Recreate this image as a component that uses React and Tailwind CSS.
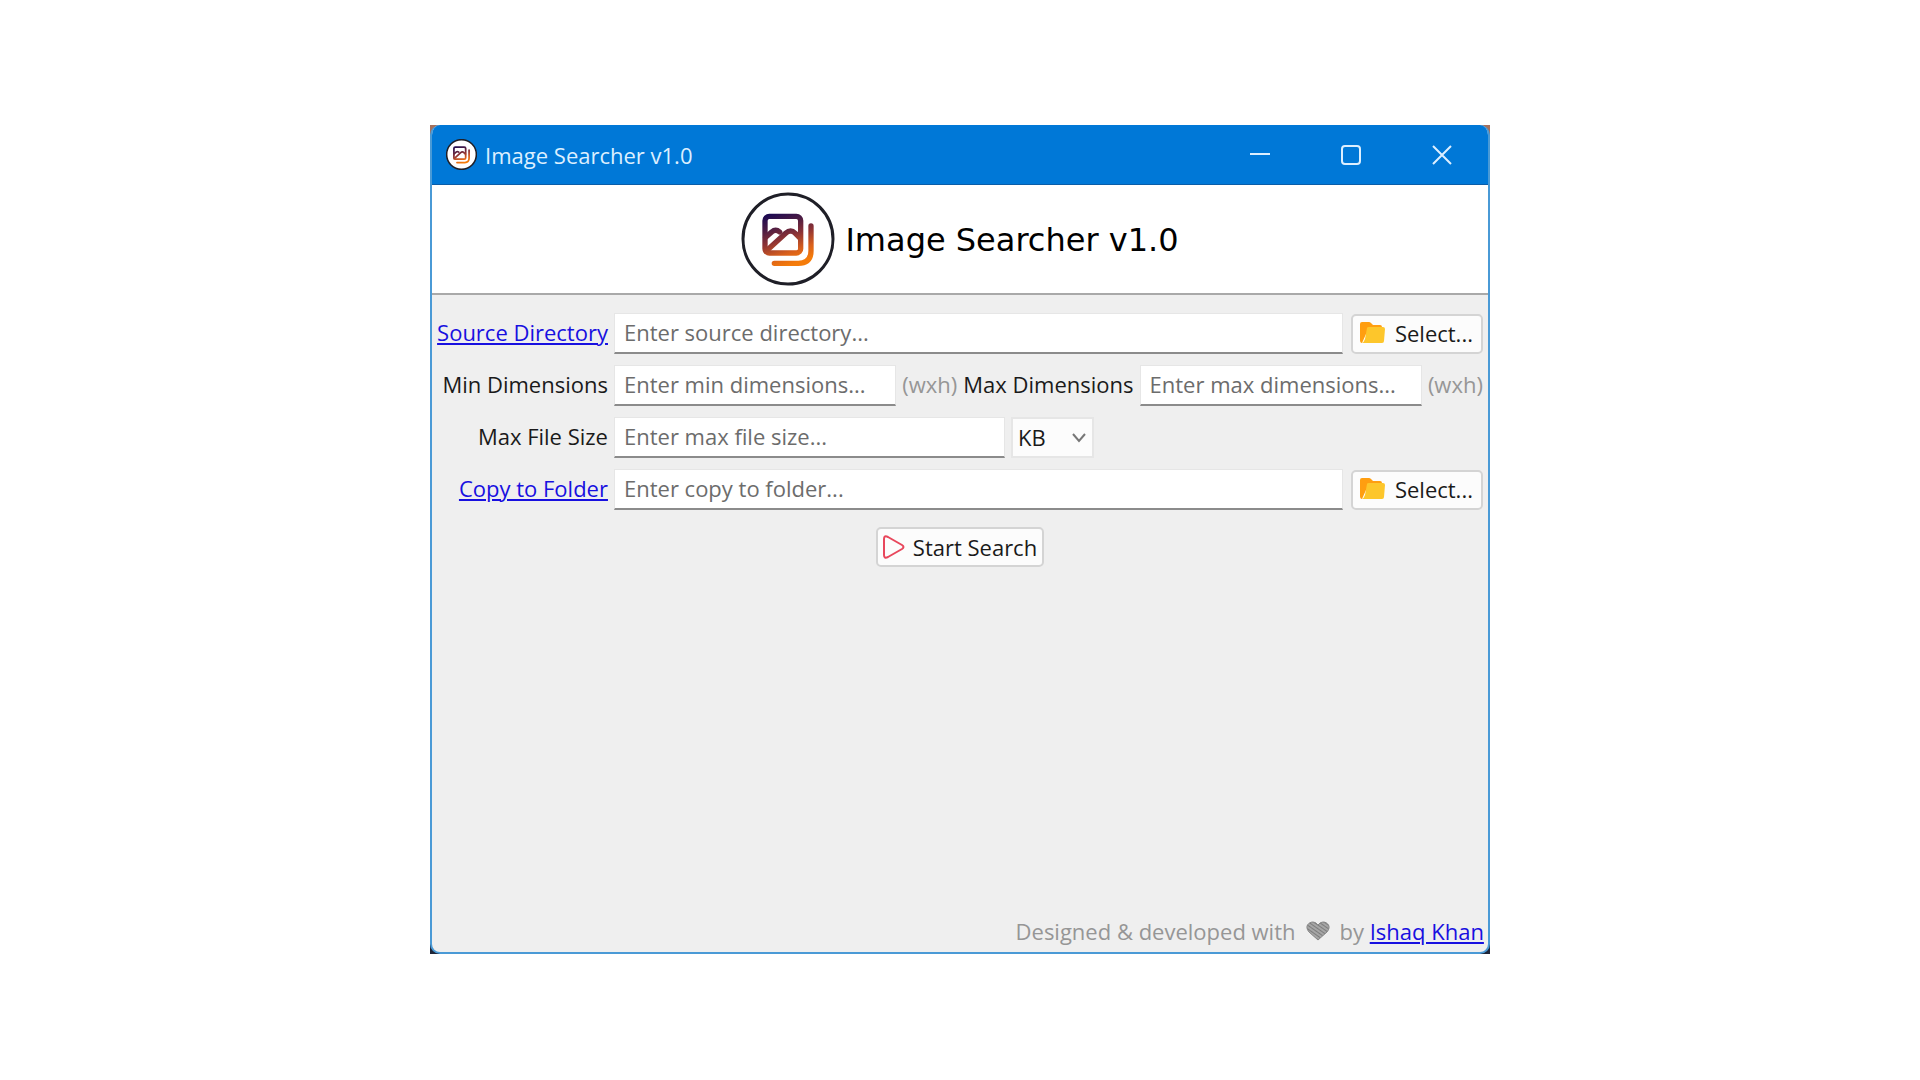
import React from "react";

function Logo({ className, ring }) {
  return (
    <svg className={className} viewBox="36 36 282 282" fill="none" aria-hidden="true">
      <defs>
        <linearGradient id="logoStroke" gradientUnits="userSpaceOnUse" x1="130" y1="100" x2="185" y2="255">
          <stop offset="0" stopColor="#1c0a52" />
          <stop offset="0.25" stopColor="#4c1c44" />
          <stop offset="0.5" stopColor="#8c3235" />
          <stop offset="0.78" stopColor="#d9601c" />
          <stop offset="1" stopColor="#f57c0a" />
        </linearGradient>
      </defs>
      <circle cx="177" cy="177" r="135" fill="#fff" stroke="#1f1f27" strokeWidth={ring} />
      <g stroke="url(#logoStroke)" strokeWidth="16" strokeLinecap="round" strokeLinejoin="round">
        <rect x="108" y="109" width="107" height="110" rx="13" />
        <path d="M110 172 L128 156 Q140 146 152 156" />
        <path d="M111 214 L170 160 Q185 146 199 160 L213 174" />
        <path d="M246 138 V212 Q246 250 208 250 H136" />
      </g>
    </svg>
  );
}

function FolderIcon() {
  return (
    <svg className="h-[22px] w-[25px] shrink-0" viewBox="0 0 25 22" aria-hidden="true">
      <path d="M0 2 Q0 0 2 0 H9 Q10 0 11 1 L13 3 H20 Q22 3 22 5 V12 H6 L2 21 Q0 21 0 18 Z" fill="#ff9e10" />
      <path d="M7 6 Q7 5 9 5 H23 Q25 5 25 7 L24 19 Q24 21 22 21 H2 Q4 20 5 17 Z" fill="#fdc62b" />
    </svg>
  );
}

const link = "text-[#1810e0] underline decoration-2 underline-offset-2";
const labelText = "whitespace-nowrap pb-1 text-right";
const hint = "pb-1 text-[#969696]";
const field =
  "h-[41px] min-w-0 border border-b-2 border-[#e6e6e6] border-b-[#8b8b8b] bg-white px-[9px] pb-[2px] text-[#222] outline-none placeholder:text-[#6c6c6c]";
const button =
  "flex items-center rounded-[5px] border-2 border-[#d4d4d4] bg-[#fcfcfc] text-[#1a1a1a]";

function SelectButton() {
  return (
    <button type="button" className={`${button} h-10 w-[132px] shrink-0 gap-[10px] pb-[2px] pl-[7px]`}>
      <FolderIcon />
      Select...
    </button>
  );
}

function TitleBar() {
  return (
    <header className="flex h-[60px] items-center border-b border-[#0a5da8] bg-[#0078d7] pl-[14px] pr-9 text-[#dcefff]">
      <Logo className="size-[31px]" ring="14" />
      <span className="ml-2 flex-1">Image Searcher v1.0</span>
      <div className="flex items-center gap-[71px]">
        <button type="button" aria-label="Minimize">
          <svg className="size-5" viewBox="0 0 20 20" stroke="currentColor" strokeWidth="2"><path d="M0 9 H20" /></svg>
        </button>
        <button type="button" aria-label="Maximize">
          <svg className="size-5" viewBox="0 0 20 20" fill="none" stroke="currentColor" strokeWidth="2"><rect x="1" y="1" width="18" height="18" rx="3" /></svg>
        </button>
        <button type="button" aria-label="Close">
          <svg className="size-5" viewBox="0 0 20 20" stroke="currentColor" strokeWidth="2"><path d="M1 1 L19 19 M19 1 L1 19" /></svg>
        </button>
      </div>
    </header>
  );
}

function SearchForm() {
  return (
    <form className="px-[5px] pt-[18px]" onSubmit={(e) => e.preventDefault()}>
      <div className="grid grid-cols-[auto_minmax(0,1fr)] items-center gap-x-[6px] gap-y-[11px]">
        <label htmlFor="source" className={labelText}><a href="#source" className={link}>Source Directory</a></label>
        <div className="flex items-center gap-2">
          <input id="source" className={`${field} flex-1`} placeholder="Enter source directory..." />
          <SelectButton />
        </div>

        <label htmlFor="min" className={labelText}>Min Dimensions</label>
        <div className="flex items-center gap-[6px]">
          <input id="min" className={`${field} flex-1`} placeholder="Enter min dimensions..." />
          <span className={hint}>(wxh)</span>
          <label htmlFor="max" className={labelText}>Max Dimensions</label>
          <input id="max" className={`${field} flex-1`} placeholder="Enter max dimensions..." />
          <span className={hint}>(wxh)</span>
        </div>

        <label htmlFor="size" className={labelText}>Max File Size</label>
        <div className="flex items-center gap-[6px]">
          <input id="size" className={`${field} w-[45%]`} placeholder="Enter max file size..." />
          <div className="relative">
            <select id="unit" aria-label="Size unit" className="h-[41px] w-[83px] appearance-none border-2 border-[#e6e6e6] bg-[#fcfcfc] pb-[2px] pl-[5px] outline-none">
              <option>KB</option>
              <option>MB</option>
            </select>
            <svg className="pointer-events-none absolute right-2 top-4 h-[10px] w-[14px]" viewBox="0 0 14 10" fill="none" stroke="#777" strokeWidth="2"><path d="M1 1 L7 8 L13 1" /></svg>
          </div>
        </div>

        <label htmlFor="copy" className={labelText}><a href="#copy" className={link}>Copy to Folder</a></label>
        <div className="flex items-center gap-2">
          <input id="copy" className={`${field} flex-1`} placeholder="Enter copy to folder..." />
          <SelectButton />
        </div>
      </div>

      <button type="submit" className={`${button} mx-auto mt-[17px] h-10 gap-2 px-[5px]`}>
        <svg className="h-6 w-[22px]" viewBox="0 0 22 24" fill="none" stroke="#e8475c" strokeWidth="2" strokeLinejoin="round" aria-hidden="true">
          <path d="M1 4 Q1 0 5 2 L19 10 Q22 12 19 14 L5 22 Q1 24 1 20 Z" />
        </svg>
        Start Search
      </button>
    </form>
  );
}

export default function App() {
  return (
    <div className="flex min-h-screen flex-col items-center bg-white pb-[126px] pt-[125px] font-['Open_Sans',sans-serif] text-[22px] leading-7 text-[#1a1a1a]">
      <div className="flex w-[55.2%] min-w-[1050px] flex-1 bg-linear-to-b from-[#a5705c] from-50% to-[#1f2638] to-50%">
        <main className="flex min-w-0 flex-1 flex-col overflow-hidden rounded-[10px] border-2 border-t-0 border-[#4a9ad6] bg-[#efefef]">
          <TitleBar />
          <section className="flex h-[110px] items-center justify-center gap-[10px] border-b-2 border-[#a9a9a9] bg-white">
            <Logo className="size-[94px]" ring="9" />
            <h1 className="pt-[2px] font-['DejaVu_Sans',sans-serif] text-[32px] leading-10 text-black">Image Searcher v1.0</h1>
          </section>
          <SearchForm />
          <footer className="mt-auto flex items-center justify-end gap-[10px] px-1 pb-[7px] text-[#969696]">
            <span>Designed &amp; developed with</span>
            <svg className="h-5 w-6" viewBox="0 0 24 20" role="img" aria-label="love">
              <defs>
                <pattern id="hatch" width="3" height="3" patternUnits="userSpaceOnUse" patternTransform="rotate(-55)">
                  <rect width="3" height="3" fill="#a6a6a6" />
                  <rect width="1" height="3" fill="#7c7c7c" />
                </pattern>
              </defs>
              <path d="M12 19 L3 11 C-2 5 3 1 7 1 Q10 1 12 4 Q14 1 17 1 C21 1 26 5 21 11 Z" fill="url(#hatch)" stroke="#888" strokeWidth="1" />
            </svg>
            <span>by <a href="#author" className={link}>Ishaq Khan</a></span>
          </footer>
        </main>
      </div>
    </div>
  );
}
